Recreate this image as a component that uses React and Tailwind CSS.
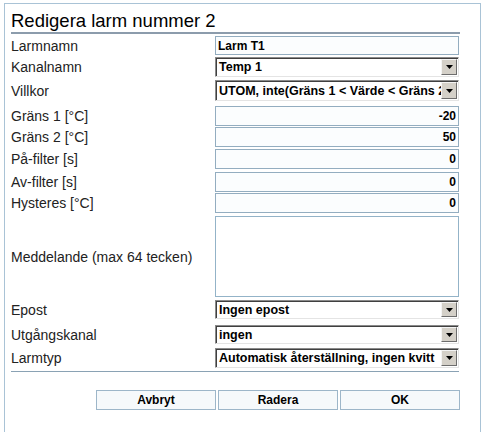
import React from 'react';

const labelCls = "w-[204px] shrink-0 text-[14px] leading-[16px] text-[#222]";

const TextBox = ({ value, right, h = 'h-[20px]' }) => (
    <div className={`${h} w-[244px] border border-[#93adc0] bg-[#fbfdfe] flex items-center px-[2px] text-[12px] font-bold text-black ${right ? 'justify-end' : ''}`}>
        {value}
    </div>
);

const Select = ({ value, h = 'h-[20px]' }) => (
    <div className={`${h} w-[244px] flex border border-[#8a8a8a] border-b-[#e4e4e4] border-r-[#e4e4e4] shadow-[inset_1px_1px_0_#404040] bg-white`}>
        <div className="flex-1 overflow-hidden whitespace-nowrap pl-[3px] pt-[1px] flex items-center text-[12.5px] font-bold text-black">
            {value}
        </div>
        <div className="w-[16px] shrink-0 my-[1px] mr-[1px] bg-[#d4d0c8] border border-[#f4f4f4] border-b-[#6d6d6d] border-r-[#6d6d6d] flex items-center justify-center">
            <svg width="7" height="4" viewBox="0 0 7 4"><path d="M0 0h7L3.5 4z" fill="#000" /></svg>
        </div>
    </div>
);

const Row = ({ label, mt, children }) => (
    <div className={`flex items-center ${mt}`}>
        <div className={labelCls}>{label}</div>
        {children}
    </div>
);

const Button = ({ children }) => (
    <button className="w-[120px] h-[20px] border border-[#9db6c9] bg-[#f6f9fb] text-[12px] font-bold text-black leading-none">
        {children}
    </button>
);

const App = () => {
    return (
        <div className="w-[486px] h-[432px] overflow-hidden bg-white pt-[3px] pl-[4px]" style={{ fontFamily: '"Liberation Sans", Arial, sans-serif' }}>
            <div className="w-[477px] h-[440px] border border-[#a9c3d6] px-[6px]">

                {/* title */}
                <div className="w-[449px] pt-[6px] text-[18.5px] leading-[22px] text-black border-b-2 border-[#8c9cac]">
                    Redigera larm nummer 2
                </div>

                <Row label="Larmnamn" mt="mt-[2px]">
                    <TextBox value="Larm T1" h="h-[19px]" />
                </Row>
                <Row label="Kanalnamn" mt="mt-[2px]">
                    <Select value="Temp 1" />
                </Row>
                <Row label="Villkor" mt="mt-[3px]">
                    <Select value="UTOM, inte(Gräns 1 < Värde < Gräns 2" h="h-[21px]" />
                </Row>
                <Row label="Gräns 1 [°C]" mt="mt-[5px]">
                    <TextBox value="-20" right />
                </Row>
                <Row label="Gräns 2 [°C]" mt="mt-[1px]">
                    <TextBox value="50" right />
                </Row>
                <Row label="På-filter [s]" mt="mt-[2px]">
                    <TextBox value="0" right />
                </Row>
                <Row label="Av-filter [s]" mt="mt-[3px]">
                    <TextBox value="0" right />
                </Row>
                <Row label="Hysteres [°C]" mt="mt-[1px]">
                    <TextBox value="0" right />
                </Row>
                <Row label="Meddelande (max 64 tecken)" mt="mt-[3px]">
                    <div className="h-[81px] w-[244px] border border-[#93b3c8] bg-white"></div>
                </Row>
                <Row label="Epost" mt="mt-[3px]">
                    <Select value="Ingen epost" h="h-[19px]" />
                </Row>
                <Row label="Utgångskanal" mt="mt-[6px]">
                    <Select value="ingen" h="h-[19px]" />
                </Row>
                <Row label="Larmtyp" mt="mt-[4px]">
                    <Select value="Automatisk återställning, ingen kvitt" />
                </Row>

                <div className="w-[448px] h-px mt-[3px] bg-[#8aa2b4]"></div>

                {/* buttons */}
                <div className="flex gap-[2px] ml-[85px] mt-[18px]">
                    <Button>Avbryt</Button>
                    <Button>Radera</Button>
                    <Button>OK</Button>
                </div>
            </div>
        </div>
    );
};

export default App;
